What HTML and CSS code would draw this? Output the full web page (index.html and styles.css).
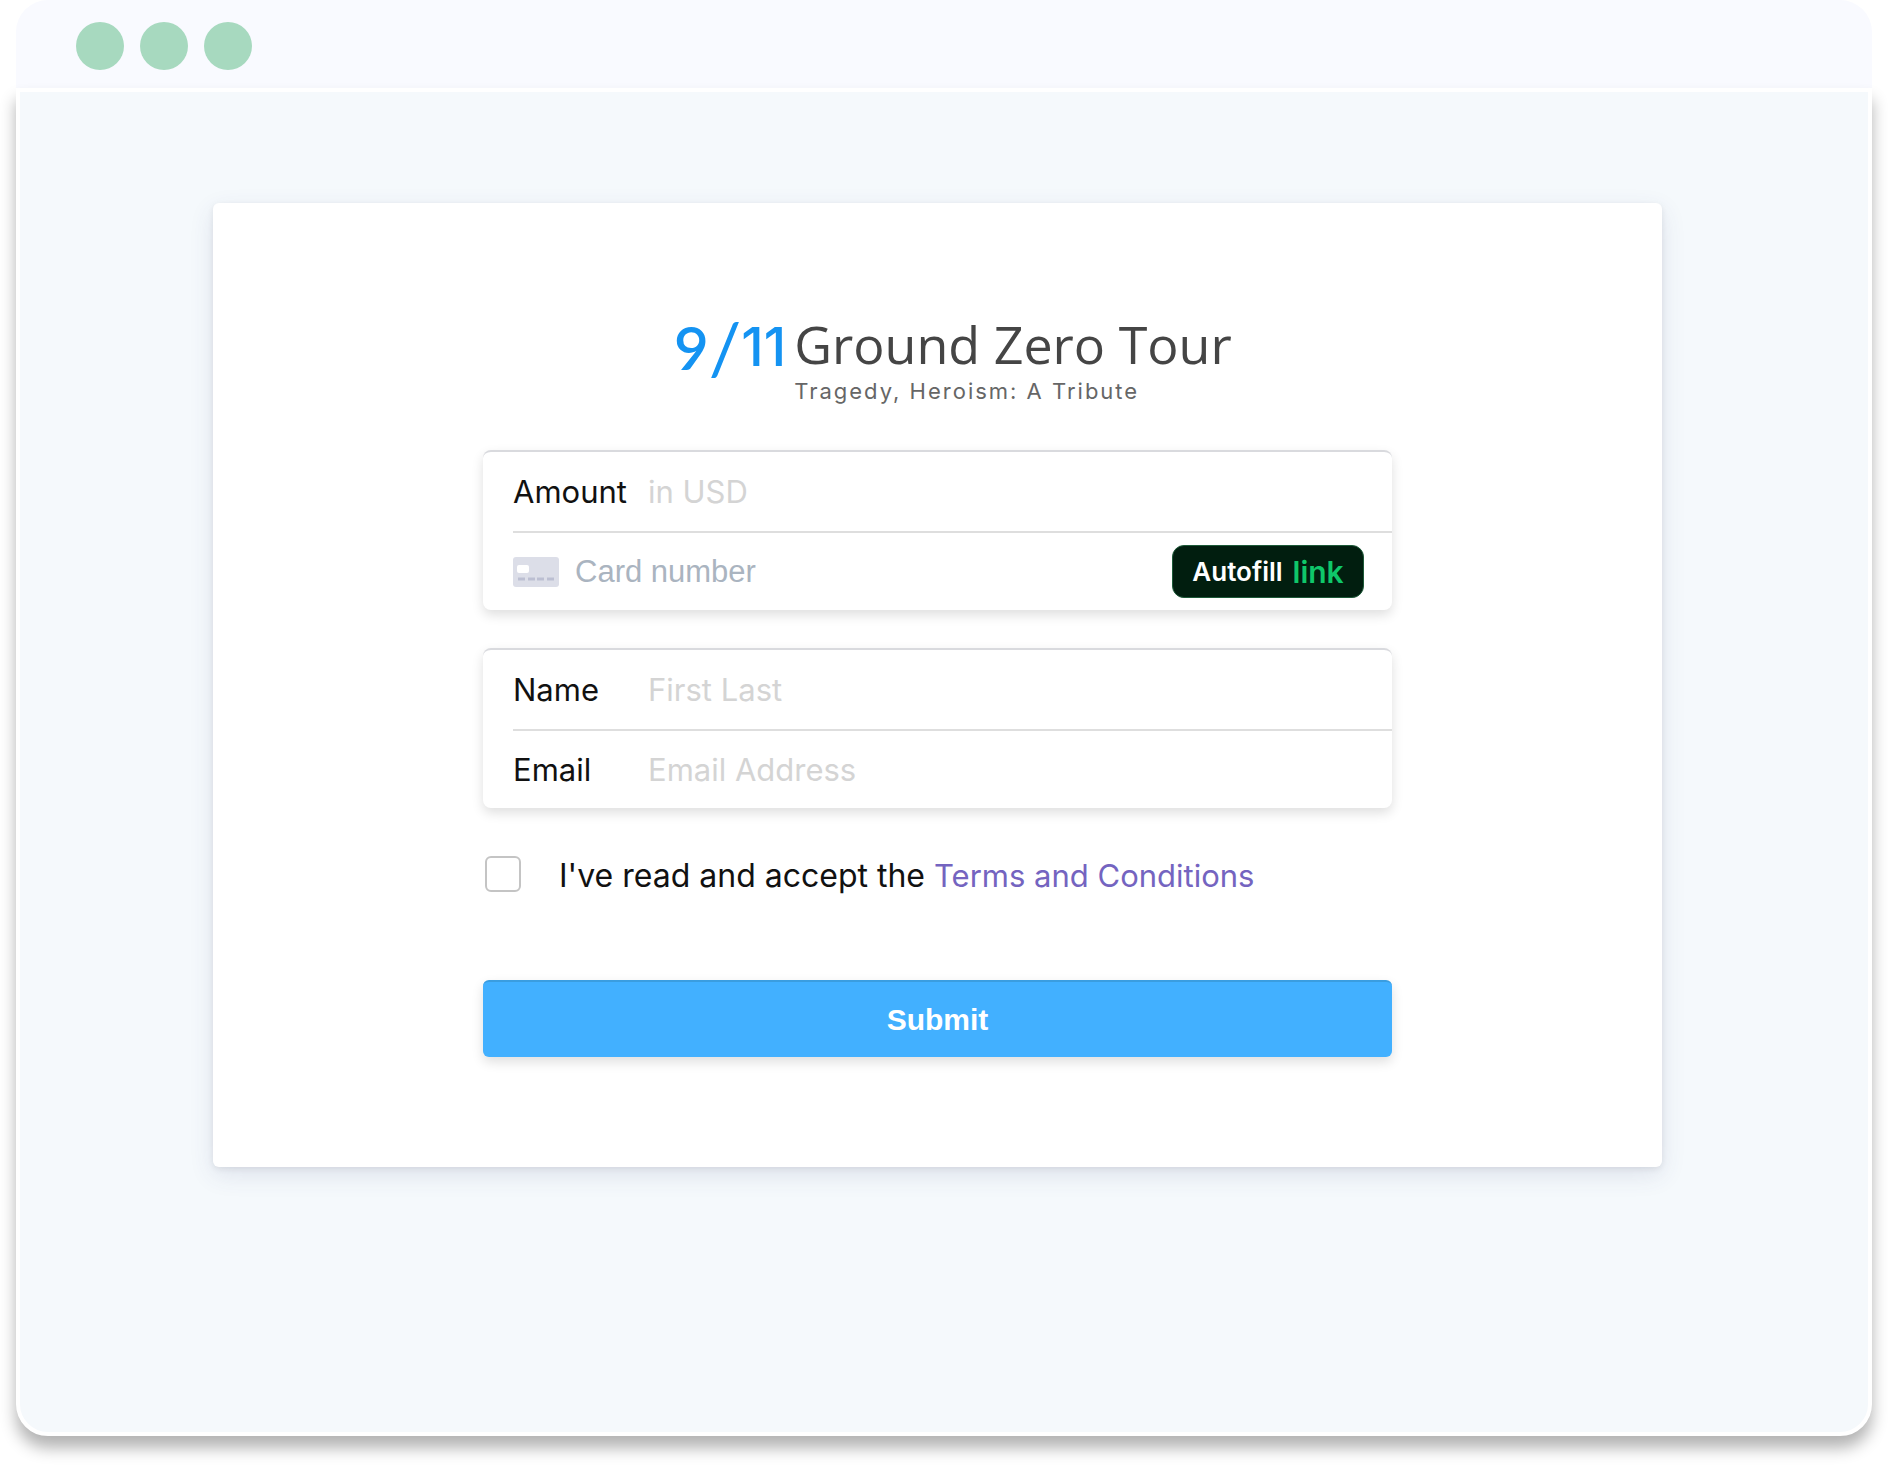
FILE: index.html
```html
<!DOCTYPE html>
<html lang="en">
<head>
    <meta charset="UTF-8">
    <meta name="viewport" content="width=device-width, initial-scale=1.0">
    <title>9/11 Ground Zero Tour</title>
    <link rel="stylesheet" href="styles.css">
</head>
<body>
    <div class="window">
        <div class="window-bar">
            <span class="dot"></span>
            <span class="dot"></span>
            <span class="dot"></span>
        </div>
        <main class="window-body">
            <div class="card">
                <form class="form">
                    <div class="logo">
                        <div class="logo-number"><span class="nine">9</span><span class="slash">/</span><span class="eleven">11</span></div>
                        <div class="logo-text">
                            <h1 class="logo-title">Ground Zero Tour</h1>
                            <p class="logo-tagline">Tragedy, Heroism: A Tribute</p>
                        </div>
                    </div>

                    <div class="group">
                        <div class="row">
                            <label for="amount">Amount</label>
                            <input type="text" id="amount" placeholder="in USD">
                        </div>
                        <div class="row card-row">
                            <svg class="card-icon" viewBox="0 0 46 30" aria-hidden="true">
                                <rect width="46" height="30" rx="3" fill="#dcdee8"/>
                                <rect x="4" y="8" width="12" height="8" rx="2" fill="#fff"/>
                                <path d="M5 22h7M15 22h7M24 22h7M34 22h7" stroke="#bcbfd2" stroke-width="3"/>
                            </svg>
                            <input type="text" id="card-number" placeholder="Card number" aria-label="Card number">
                            <button type="button" class="autofill">Autofill <span>link</span></button>
                        </div>
                    </div>

                    <div class="group">
                        <div class="row">
                            <label for="name">Name</label>
                            <input type="text" id="name" placeholder="First Last">
                        </div>
                        <div class="row">
                            <label for="email">Email</label>
                            <input type="email" id="email" placeholder="Email Address">
                        </div>
                    </div>

                    <div class="terms">
                        <input type="checkbox" id="terms">
                        <label for="terms">I've read and accept the <a href="#">Terms and Conditions</a></label>
                    </div>

                    <button type="submit" class="submit">Submit</button>
                </form>
            </div>
        </main>
    </div>
</body>
</html>
```
FILE: styles.css
```css
* {
    box-sizing: border-box;
}
body {
    margin: 0;
    background-color: #ffffff;
    font-family: Inter, "Liberation Sans", sans-serif;
    color: #111111;
}
.window {
    display: flex;
    flex-direction: column;
    min-height: 100vh;
    padding: 0 16px 32px;
}
.window-bar {
    display: flex;
    gap: 16px;
    padding: 22px 60px 18px;
    background-color: #f9faff;
    border-radius: 32px 32px 0 0;
}
.dot {
    width: 48px;
    height: 48px;
    border-radius: 50%;
    background-color: #a7d9bf;
}
.window-body {
    flex: 1;
    padding: 111px 206px 100px 193px;
    background-color: #f5f9fc;
    border: 4px solid #ffffff;
    border-radius: 0 0 32px 32px;
    box-shadow: 0 12px 16px rgba(0, 0, 0, 0.3);
}
.card {
    padding: 106px 40px 110px;
    background-color: #ffffff;
    border-radius: 6px;
    box-shadow: 0 8px 24px rgba(60, 66, 120, 0.12), 0 2px 6px rgba(0, 0, 0, 0.08);
}
.form {
    max-width: 909px;
    margin: 0 auto;
}
.logo {
    display: flex;
    align-items: flex-start;
    height: 96px;
    margin: 0 0 45px 191px;
}
.logo-number {
    display: flex;
    align-items: center;
    height: 76px;
    margin-right: 8px;
    color: #1493f2;
    line-height: 76px;
}
.nine {
    font-family: Lato, sans-serif;
    font-size: 60px;
    font-weight: 600;
}
.slash {
    font-family: Lato, sans-serif;
    font-size: 72px;
    font-weight: 400;
}
.eleven {
    font-size: 54px;
    font-weight: 500;
}
.logo-title {
    margin: 0;
    font-family: "Open Sans", sans-serif;
    font-size: 52px;
    font-weight: 400;
    line-height: 70px;
    color: #454545;
}
.logo-tagline {
    margin: 0;
    font-size: 22px;
    line-height: 24px;
    letter-spacing: 2px;
    color: #666666;
}
.group {
    margin-bottom: 38px;
    padding-left: 30px;
    border-top: 2px solid #d9dade;
    border-radius: 8px;
    background-color: #ffffff;
    box-shadow: 0 5px 12px rgba(0, 0, 0, 0.13);
}
.row {
    display: flex;
    align-items: center;
    height: 79px;
}
.row + .row {
    border-top: 2px solid #dedede;
}
.row label {
    width: 135px;
    font-size: 31px;
}
.row input {
    flex: 1;
    min-width: 0;
    height: 64px;
    padding: 0;
    border: none;
    outline: none;
    background: none;
    font-family: inherit;
    font-size: 31px;
    color: #111111;
}
.row input::placeholder {
    color: #d4d4d4;
    opacity: 1;
}
.card-icon {
    width: 46px;
    height: 30px;
    margin-right: 16px;
}
.card-row input {
    font-family: "Liberation Sans", sans-serif;
}
.card-row input::placeholder {
    color: #aab4c0;
}
.autofill {
    display: flex;
    align-items: center;
    justify-content: center;
    gap: 10px;
    width: 192px;
    height: 53px;
    margin-right: 28px;
    padding: 0;
    border: 1px solid #1c5a38;
    border-radius: 12px;
    background-color: #011e0f;
    color: #ffffff;
    font-family: inherit;
    font-size: 26px;
    font-weight: 600;
    cursor: pointer;
}
.autofill span {
    color: #0fc76a;
    font-size: 30px;
    line-height: 32px;
}
.terms {
    display: flex;
    align-items: flex-start;
    margin: 48px 0 84px 2px;
    font-size: 32px;
    line-height: 40px;
}
.terms input {
    appearance: none;
    width: 36px;
    height: 36px;
    margin: 0 38px 0 0;
    border: 2px solid #c4c4c4;
    border-radius: 6px;
    background-color: #ffffff;
}
.terms input:checked {
    background-color: #42b0ff;
}
.terms a {
    color: #7464c0;
    font-size: 31px;
    text-decoration: none;
}
.submit {
    display: block;
    width: 100%;
    height: 77px;
    padding: 0;
    border: none;
    border-top: 2px solid #3a9de0;
    border-radius: 6px;
    background-color: #42b0ff;
    box-shadow: 0 5px 12px rgba(0, 0, 0, 0.13);
    color: #ffffff;
    font-family: "Liberation Sans", sans-serif;
    font-size: 30px;
    font-weight: 700;
    cursor: pointer;
}
```
